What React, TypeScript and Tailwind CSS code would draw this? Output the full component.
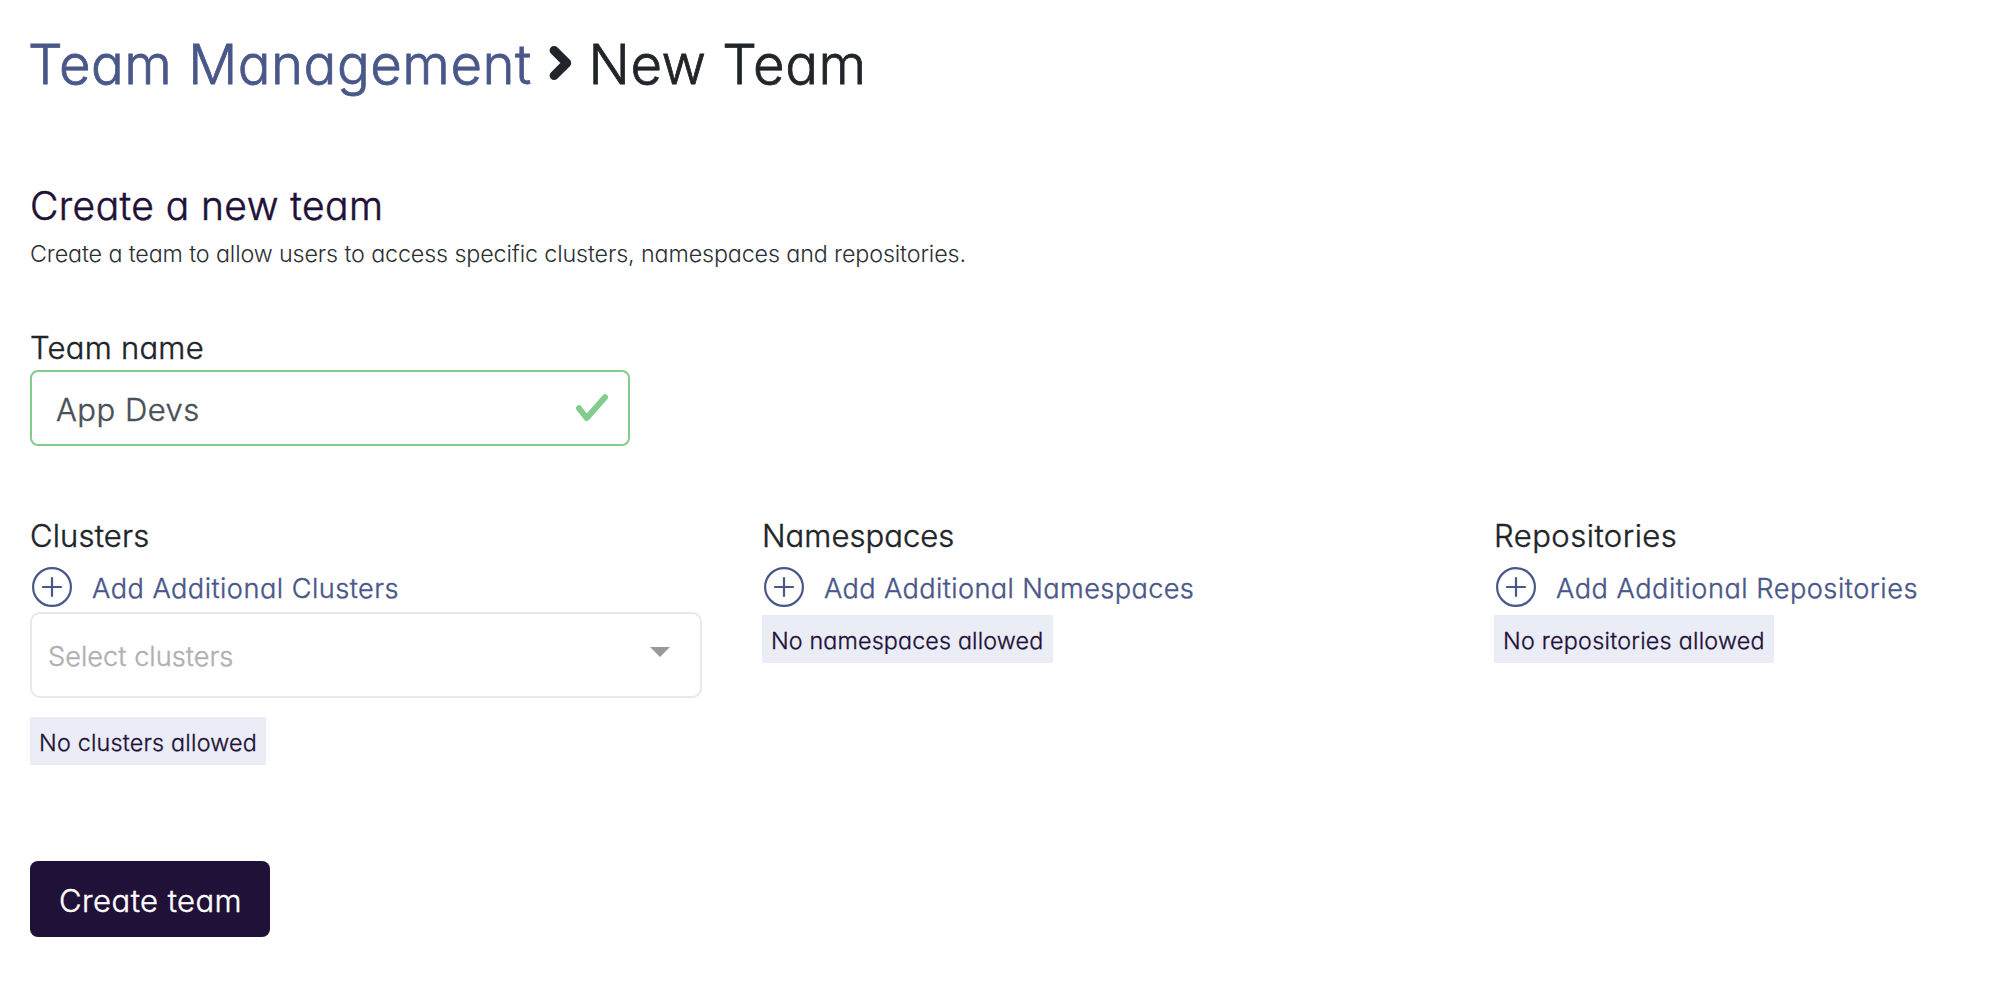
function PlusCircle() {
  return (
    <svg className="h-10 w-10 shrink-0" viewBox="0 0 40 40" fill="none" stroke="currentColor" strokeWidth="2.2">
      <circle cx="20" cy="20" r="18.9" />
      <path d="M20 11v18M11 20h18" strokeLinecap="round" />
    </svg>
  );
}

const thicken = "[-webkit-text-stroke:0.014em_currentColor]";

function Label({ text, spacing }: { text: string; spacing: string }) {
  return <div className={`text-[31px] leading-10 text-[#212529] ${thicken} ${spacing}`}>{text}</div>;
}

function AddLink({ text, spacing }: { text: string; spacing: string }) {
  return (
    <a className="mt-[11px] flex h-10 w-max items-start gap-5 pl-0.5 text-[#495789]">
      <PlusCircle />
      <span className={`text-[27.2px] leading-11 whitespace-nowrap ${thicken} ${spacing}`}>{text}</span>
    </a>
  );
}

function Chip({ text, className }: { text: string; className: string }) {
  return (
    <div
      className={`flex h-12 items-start bg-[#eaecf6] pt-[3px] pl-[9px] text-[23.3px] leading-[45px] whitespace-nowrap text-[#1f1137] ${thicken} ${className}`}
    >
      {text}
    </div>
  );
}

export default function App() {
  return (
    <main className="min-h-[982px] overflow-hidden bg-white pt-8 pl-[30px] font-['Inter',sans-serif] font-light text-[#212529] [font-feature-settings:'cv11']">
      <h1 className={`-ml-0.5 flex h-16 items-start text-[54.5px] leading-16 ${thicken}`}>
        <a className="w-[520.5px] tracking-[0.5px] text-[#495789]">Team Management</a>
        <svg className="mt-[13px] h-[36px] w-[23px]" viewBox="0 0 23 36" fill="none" stroke="#212529" strokeWidth="9" strokeLinecap="round" strokeLinejoin="round">
          <path d="M5.1 5.4 17.7 18 5.1 30.6" />
        </svg>
        <span className="ml-[17px] tracking-[0.5px]">New Team</span>
      </h1>

      <h2 className={`mt-[86px] text-[39px] leading-12 tracking-[0.42px] text-[#1f1137] ${thicken}`}>Create a new team</h2>
      <p className="mt-1.5 text-[23.3px] leading-9 tracking-[-0.13px] text-[#2b2f33]">
        Create a team to allow users to access specific clusters, namespaces and repositories.
      </p>

      <div className="mt-14">
        <Label text="Team name" spacing="tracking-[0.25px]" />
        <div className="mt-0.5 flex h-[76px] w-[600px] items-start justify-between rounded-lg border-2 border-[#82cc8e] pr-5 pl-6">
          <span className={`pt-px text-[31px] leading-[73px] tracking-[0.5px] text-[#495057] ${thicken}`}>App Devs</span>
          <svg className="mt-[22px] h-7 w-8" viewBox="0 0 32 28" fill="none" stroke="#82cc8e" strokeWidth="6" strokeLinecap="round" strokeLinejoin="round">
            <path d="M3 14.3 10.7 24 29 3.3" />
          </svg>
        </div>
      </div>

      <div className="mt-[70px] grid grid-cols-[672px_672px_auto] gap-[60px]">
        <section>
          <Label text="Clusters" spacing="tracking-[0.15px]" />
          <AddLink text="Add Additional Clusters" spacing="tracking-[0.46px]" />
          <div className="mt-[5px] flex h-[86px] items-start justify-between rounded-[10px] border-2 border-[#e8e8e8] pr-[30px] pl-4">
            <span className={`pt-0.5 text-[27.2px] leading-[81px] tracking-[0.02px] text-[#b0b0b0] ${thicken}`}>Select clusters</span>
            <svg className="mt-[33px] h-2.5 w-5" viewBox="0 0 20 10" fill="#999">
              <path d="M0 0h20L10 10z" />
            </svg>
          </div>
          <Chip text="No clusters allowed" className="mt-[19px] w-[236px] tracking-[0.22px]" />
        </section>
        <section>
          <Label text="Namespaces" spacing="tracking-[0.05px]" />
          <AddLink text="Add Additional Namespaces" spacing="tracking-[0.37px]" />
          <Chip text="No namespaces allowed" className="mt-2 w-[291px] tracking-[0.15px]" />
        </section>
        <section>
          <Label text="Repositories" spacing="tracking-[0.48px]" />
          <AddLink text="Add Additional Repositories" spacing="tracking-[0.5px]" />
          <Chip text="No repositories allowed" className="mt-2 w-[280px] tracking-[0.26px]" />
        </section>
      </div>

      <button className={`mt-24 flex h-[76px] w-60 items-start rounded-lg bg-[#1f1137] pt-[3px] pl-[29px] text-[31px] leading-[73px] tracking-[0.45px] text-white ${thicken}`}>
        Create team
      </button>
    </main>
  );
}
